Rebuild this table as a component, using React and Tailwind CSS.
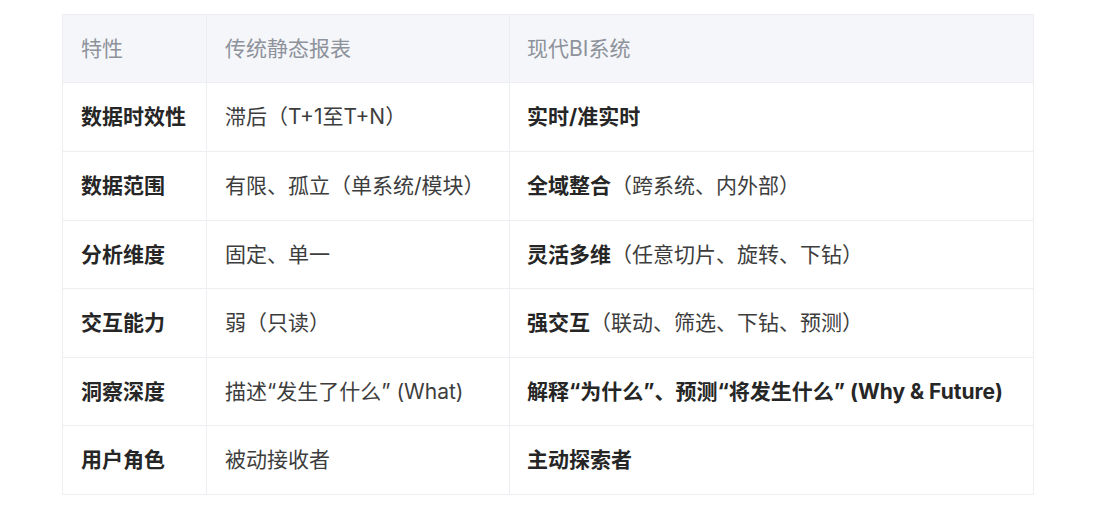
export default function App() {
  const rows = [
    { k: "数据时效性", a: "滞后（T+1至T+N）", b: "实时/准实时", c: "", h: "h-[69px]" },
    { k: "数据范围", a: "有限、孤立（单系统/模块）", b: "全域整合", c: "（跨系统、内外部）", h: "h-[69px]" },
    { k: "分析维度", a: "固定、单一", b: "灵活多维", c: "（任意切片、旋转、下钻）", h: "h-[68px]" },
    { k: "交互能力", a: "弱（只读）", b: "强交互", c: "（联动、筛选、下钻、预测）", h: "h-[69px]" },
    { k: "洞察深度", a: "描述“发生了什么” (What)", b: "解释“为什么”、预测“将发生什么” (Why & Future)", c: "", h: "h-[68px]" },
    { k: "用户角色", a: "被动接收者", b: "主动探索者", c: "", h: "h-[68px]" },
  ];
  return (
    <div
      className="w-[1101px] h-[510px] bg-white pt-[14px] pl-[62px]"
      style={{ fontFamily: 'Inter, "Noto Sans CJK SC", sans-serif' }}
    >
      <div className="w-[972px] border border-[#eceef2] text-[21px] leading-[28px]">
        <div className="grid grid-cols-[144px_303px_523px] h-[68px] bg-[#f5f6fa] border-b border-[#eceef2] text-[#8d929b]">
          <div className="flex items-center pl-[18px] border-r border-[#eceef2]">特性</div>
          <div className="flex items-center pl-[18px] border-r border-[#eceef2]">传统静态报表</div>
          <div className="flex items-center pl-[17px]">现代BI系统</div>
        </div>
        {rows.map((r, i) => (
          <div
            key={i}
            className={`grid grid-cols-[144px_303px_523px] ${r.h} ${i < rows.length - 1 ? "border-b border-[#eceef2]" : ""}`}
          >
            <div className="flex items-center pl-[18px] border-r border-[#eceef2] font-bold text-[#262626] whitespace-nowrap">{r.k}</div>
            <div className="flex items-center pl-[18px] border-r border-[#eceef2] text-[#3d3d3d] whitespace-nowrap">{r.a}</div>
            <div className="flex items-center pl-[17px] text-[#3d3d3d] whitespace-nowrap">
              <span className="font-bold text-[#262626]">{r.b}</span>
              {r.c && <span>{r.c}</span>}
            </div>
          </div>
        ))}
      </div>
    </div>
  );
}
